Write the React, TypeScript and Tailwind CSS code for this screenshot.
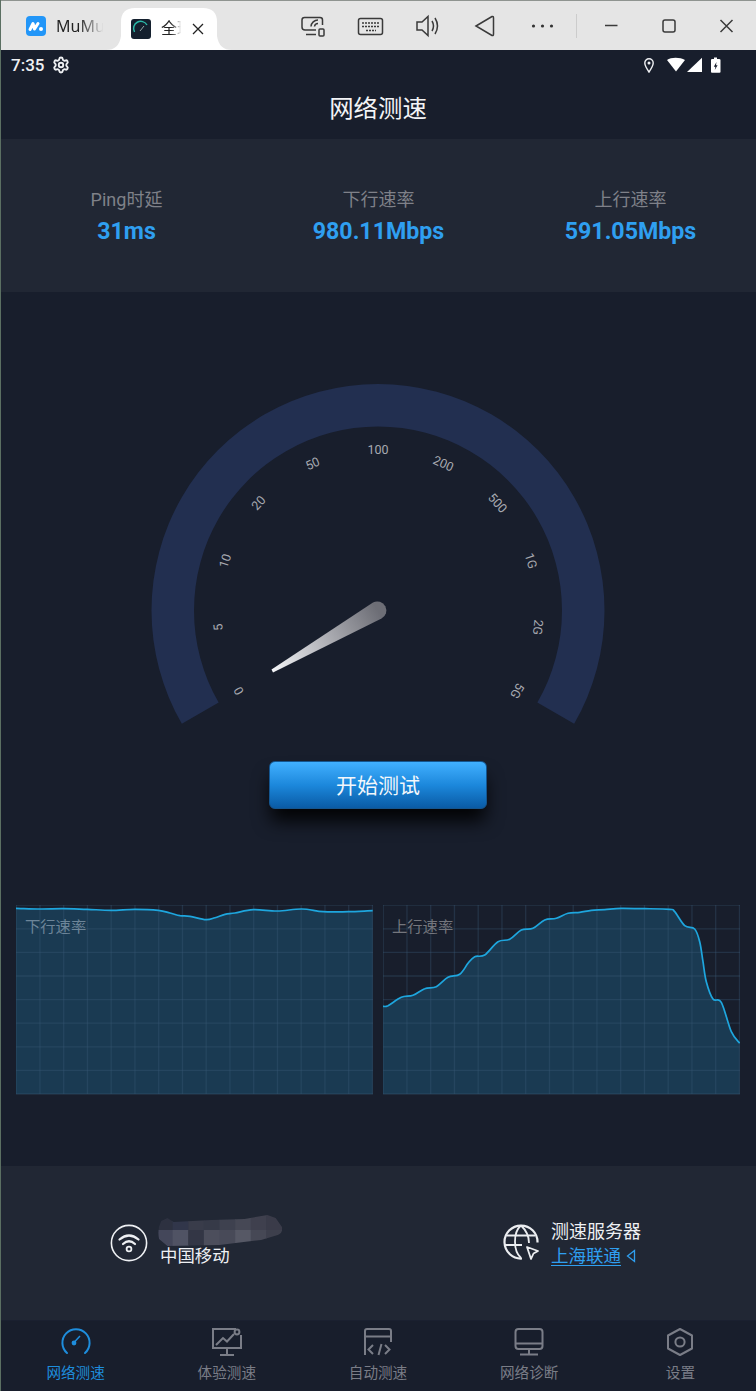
import React from "react";
import { Settings } from "lucide-react";

type P = [number, number];

function smooth(pts: P[]) {
  let d = `M${pts[0][0]} ${pts[0][1]}`;
  for (let i = 0; i < pts.length - 1; i++) {
    const a = pts[Math.max(0, i - 1)];
    const b = pts[i];
    const c = pts[i + 1];
    const e = pts[Math.min(pts.length - 1, i + 2)];
    const t = 0.17;
    d += ` C${(b[0] + (c[0] - a[0]) * t).toFixed(1)} ${(b[1] + (c[1] - a[1]) * t).toFixed(1)} ${(c[0] - (e[0] - b[0]) * t).toFixed(1)} ${(c[1] - (e[1] - b[1]) * t).toFixed(1)} ${c[0].toFixed(1)} ${c[1].toFixed(1)}`;
  }
  return d;
}

const down: P[] = ([
  [48, 40], [120, 42], [190, 41], [262, 43], [333, 46], [405, 43], [475, 46], [510, 54], [540, 62], [570, 64], [618, 74], [645, 68], [675, 58], [705, 54], [760, 44], [832, 48], [905, 42], [970, 50], [1045, 50], [1118, 47],
] as P[]).map(([x, y]) => [x / 3 - 16, y / 3 - 10] as P);

const up: P[] = ([
  [15, 334], [30, 332], [70, 307], [105, 301], [140, 281], [175, 275], [210, 247], [245, 238], [270, 205], [290, 185], [320, 180], [360, 140], [395, 133], [430, 105], [465, 100], [500, 75], [535, 70], [570, 55], [605, 52], [640, 46], [680, 44], [730, 40], [800, 41], [875, 43], [890, 50], [920, 92], [950, 102], [965, 140], [975, 200], [985, 260], [1005, 312], [1030, 322], [1060, 410], [1085, 445],
] as P[]).map(([x, y]) => [x / 3 - 5, y / 3 - 10] as P);

function Chart({ pts, label, labelClass }: { pts: P[]; label: string; labelClass: string }) {
  const line = smooth(pts);
  const last = pts[pts.length - 1];
  const cols = Array.from({ length: 16 }, (_, i) => i * 23.75 + 0.2);
  const rows = Array.from({ length: 9 }, (_, i) => i * 23.6 + 0.2);
  return (
    <div className="relative h-[190px] w-[357px]">
      <svg width="357" height="190" viewBox="0 0 357 190" className="block">
        <path d={`${line} L${last[0]} 189 L${pts[0][0]} 189 Z`} fill="#1a3a52" />
        {cols.map((x) => (
          <line key={x} x1={x} x2={x} y1="0" y2="189" stroke="#3a5b78" strokeOpacity="0.34" strokeWidth="1.3" />
        ))}
        {rows.map((y) => (
          <line key={y} x1="0" x2="357" y1={y} y2={y} stroke="#3a5b78" strokeOpacity="0.34" strokeWidth="1.3" />
        ))}
        <path d={line} fill="none" stroke="#1ea6de" strokeWidth="1.7" />
      </svg>
      <span className={`absolute left-[9px] top-[11px] text-[15.3px] leading-[22px] ${labelClass}`}>{label}</span>
    </div>
  );
}

const ticks = ["0", "5", "10", "20", "50", "100", "200", "500", "1G", "2G", "5G"];

function Gauge() {
  const cx = 240;
  const cy = 240.5;
  const rad = (a: number) => ((a - 90) * Math.PI) / 180;
  const pt = (r: number, a: number) => [cx + r * Math.cos(rad(a)), cy + r * Math.sin(rad(a))];
  const [ox0, oy0] = pt(226.5, -120);
  const [ox1, oy1] = pt(226.5, 120);
  const [ix0, iy0] = pt(184, -120);
  const [ix1, iy1] = pt(184, 120);
  return (
    <svg width="480" height="370" viewBox="0 0 480 370" className="block">
      <defs>
        <linearGradient id="needle" gradientUnits="userSpaceOnUse" x1="134" y1="301" x2="240" y2="241">
          <stop offset="0" stopColor="#f4f5f8" />
          <stop offset="1" stopColor="#6d6e76" />
        </linearGradient>
      </defs>
      <path
        d={`M${ox0} ${oy0} A226.5 226.5 0 1 1 ${ox1} ${oy1} L${ix1} ${iy1} A184 184 0 1 0 ${ix0} ${iy0} Z`}
        fill="#222f50"
      />
      {ticks.map((t, i) => {
        const a = -120 + i * 24;
        const [x, y] = pt(161, a);
        return (
          <text
            key={t}
            x={x}
            y={y}
            textAnchor="middle"
            dominantBaseline="central"
            fontSize="12.5"
            fill="#a7a9b0"
            transform={`rotate(${a} ${x} ${y})`}
          >
            {t}
          </text>
        );
      })}
      <path d="M133.5 299.5 L235 232.5 A9 9 0 1 1 243.5 248.5 L135 302.5 Z" fill="url(#needle)" />
    </svg>
  );
}

function WindowBar() {
  return (
    <div className="relative flex h-[50px] items-center border-t border-[#8f9490] bg-[#e5e5e5]">
      <div className="ml-[26px] flex items-center gap-[10px]">
        <svg width="20" height="20" viewBox="0 0 20 20">
          <rect width="20" height="20" rx="4" fill="#2296f8" />
          <path d="M4 13.5 L7 7.5 L8.5 13 L12 7.5" fill="none" stroke="#fff" strokeWidth="3" strokeLinecap="round" strokeLinejoin="round" />
          <circle cx="15" cy="13" r="2" fill="#fff" />
        </svg>
        <span className="w-[50px] whitespace-nowrap bg-gradient-to-r from-[#222] from-45% to-[#e5e5e5] to-95% bg-clip-text text-[16px] text-transparent [font-family:'Noto_Sans',sans-serif]">
          MuMu
        </span>
      </div>
      <svg className="absolute bottom-0 left-[106px]" width="126" height="42" viewBox="0 0 126 42">
        <path d="M0 42 Q13 42 15 28 V14 Q15 0 29 0 H97 Q111 0 111 14 V28 Q113 42 126 42 Z" fill="#fff" />
      </svg>
      <div className="absolute bottom-0 left-[131px] flex h-[42px] items-center">
        <svg width="20" height="20" viewBox="0 0 20 20">
          <rect width="20" height="20" rx="3" fill="#14202e" />
          <path d="M3.5 13 A7 7 0 0 1 16 6" fill="none" stroke="#2bb8a8" strokeWidth="1.5" />
          <path d="M9 12 L13 7" stroke="#9aa" strokeWidth="1" />
        </svg>
        <span className="ml-[10px] w-[24px] overflow-hidden whitespace-nowrap bg-gradient-to-r from-[#222] from-40% to-white to-85% bg-clip-text text-[16px] text-transparent">
          全球网络
        </span>
        <svg className="ml-[7px]" width="12" height="12" viewBox="0 0 12 12">
          <path d="M1 1 L11 11 M11 1 L1 11" stroke="#222" strokeWidth="1.3" />
        </svg>
      </div>
      <svg className="absolute left-[296px] top-0" width="460" height="49" viewBox="296 0 460 49" fill="none" stroke="#3a3a3a" strokeWidth="1.5">
        <path d="M316 29 H305 Q302 29 302 26 V19 Q302 16.5 304.5 16.5 H320 Q322.5 16.5 322.5 19 V24" />
        <path d="M306 33.5 H316" />
        <path d="M311 25.5 A7 7 0 0 1 318 19 M314.5 25.5 A3.5 3.5 0 0 1 318 22.5" />
        <rect x="319" y="28" width="5" height="7" rx="1" />
        <rect x="358.5" y="17.5" width="24" height="16" rx="2" />
        <path d="M362 22 H379 M362 25.5 H379 M366 29.5 H376" strokeDasharray="2 1" />
        <path d="M417 21 H422 L428 15.5 V34.5 L422 29 H417 Z" />
        <path d="M432 20 Q435 25 432 30 M435 17 Q440 25 435 33" />
        <path d="M476 25 L492 15.5 Q493.5 15 493.5 17 V33 Q493.5 35 492 34.5 Z" />
        <circle cx="533.5" cy="25" r="1.6" fill="#333" stroke="none" />
        <circle cx="542.5" cy="25" r="1.6" fill="#333" stroke="none" />
        <circle cx="551.5" cy="25" r="1.6" fill="#333" stroke="none" />
        <path d="M576.5 13 V37" stroke="#ccc" strokeWidth="1" />
        <path d="M605 24.5 H617.5" />
        <rect x="663" y="19" width="12" height="12" rx="2" />
        <path d="M720.5 19 L732.5 31 M732.5 19 L720.5 31" />
      </svg>
    </div>
  );
}

function StatusBar() {
  return (
    <div className="flex h-[30px] items-center justify-between pl-[11px] pr-[34px] text-[#eef0f3]">
      <div className="flex items-center gap-[8px]">
        <span className="text-[17px] font-medium leading-none">7:35</span>
        <Settings size={18} strokeWidth={2.5} color="#eef0f3" />
      </div>
      <svg width="78" height="16" viewBox="0 0 78 16">
        <path d="M5 15 C2 10.5 .8 8.5 .8 6 A4.2 4.2 0 0 1 9.2 6 C9.2 8.5 8 10.5 5 15 Z" fill="none" stroke="#eef0f3" strokeWidth="1.4" />
        <circle cx="5" cy="6" r="1.5" fill="#eef0f3" />
        <path d="M23 3 C27 0 36 0 41 3 L32 14.5 Z" fill="#fff" />
        <path d="M58 0.8 V15 H43 Z" fill="#fff" />
        <path d="M68 2 H70 V0.5 H73 V2 H75 Q76.5 2 76.5 3 V15 Q76.5 15.8 75.5 15.8 H68 Q67 15.8 67 15 V3 Q67 2 68 2 Z" fill="#fff" />
        <path d="M72.5 5 L69.8 9.7 H71.4 L70.8 13 L73.6 8.3 H72 Z" fill="#181e2c" />
      </svg>
    </div>
  );
}

function Stat({ label, value }: { label: string; value: string }) {
  return (
    <div className="flex flex-col items-center gap-[3px] pl-[1px]">
      <span className="text-[18px] leading-[26px] text-[#7f8189]">{label}</span>
      <span className="text-[23.2px] font-bold leading-[30px] text-[#2f9ff0]">{value}</span>
    </div>
  );
}

function Blur() {
  const cells: [number, number, string][] = [
    [0, 0, "#2d3140"], [15, 0, "#31364a"], [30, 0, "#393c4a"], [45, 0, "#363a48"], [60, 0, "#3e414f"], [75, 0, "#464855"], [90, 0, "#3f404e"], [105, 0, "#3a3b49"],
    [0, 15, "#44475a"], [15, 15, "#505364"], [30, 15, "#333645"], [45, 15, "#4c4e5c"], [60, 15, "#484a58"], [75, 15, "#565865"], [90, 15, "#464855"], [105, 15, "#3d3f4c"],
  ];
  return (
    <svg width="126" height="32" viewBox="0 0 121 32" preserveAspectRatio="none" className="block -ml-[3px]">
      <defs>
        <clipPath id="smear">
          <path d="M4 6 L10 3 L16 7 L52 5 L84 4 L106 0 L114 3 L120 12 Q121 18 116 20 L100 25 L60 30 L10 31 L2 24 Q0 14 4 6 Z" />
        </clipPath>
      </defs>
      <g clipPath="url(#smear)">
        {cells.map(([x, y, c]) => (
          <rect key={`${x}-${y}`} x={x} y={y} width="15.5" height="16" fill={c} />
        ))}
      </g>
    </svg>
  );
}

function Footer() {
  return (
    <div className="mt-[71px] flex h-[154px] bg-[#212734]">
      <div className="ml-[110px] mt-[49px] flex w-[172px] items-start gap-[12px]">
        <svg className="mt-[9px] shrink-0" width="38" height="38" viewBox="0 0 38 38" fill="none" stroke="#eef0f3" strokeWidth="1.6">
          <circle cx="19" cy="19" r="17.6" />
          <path d="M9.5 15.5 Q19 7.5 28.5 15.5 M13 20 Q19 14.5 25 20" strokeWidth="2.2" strokeLinecap="round" />
          <circle cx="19" cy="25" r="2.4" strokeWidth="1.8" />
        </svg>
        <div className="flex flex-col">
          <Blur />
          <span className="-mt-[4px] whitespace-nowrap text-[17.4px] leading-[26px] text-[#eef0f3]">中国移动</span>
        </div>
      </div>
      <div className="ml-[221px] mt-[52px] flex items-center gap-[12px] self-start">
        <svg className="-mt-[2px]" width="36" height="36" viewBox="0 0 36 36" fill="none" stroke="#eceef1" strokeWidth="1.8">
          <path d="M19 34.5 A16.5 16.5 0 1 1 34.5 18.5" strokeWidth="2.2" />
          <path d="M18 1.5 C10 8 10 27 18 34 M18 1.5 C25 8 26 14 26 19" />
          <path d="M3.5 11.5 H32 M2 21 H19" />
          <path d="M24 23 L35 27 L30.5 29.5 L28 35 Z" strokeWidth="1.8" strokeLinejoin="round" />
        </svg>
        <div className="flex flex-col pt-[1px]">
          <span className="text-[18px] leading-[25px] text-[#eef0f3]">测速服务器</span>
          <div className="flex items-center gap-[5px]">
            <span className="text-[17.5px] leading-[24px] text-[#2f9ff0] underline underline-offset-[3px]">上海联通</span>
            <svg width="10" height="14" viewBox="0 0 10 14">
              <path d="M8.5 1.5 L1.5 7 L8.5 12.5 Z" fill="none" stroke="#2f9ff0" strokeWidth="1.3" />
            </svg>
          </div>
        </div>
      </div>
    </div>
  );
}

function TabIcon({ i }: { i: number }) {
  const stroke = i === 0 ? "#1e8ddc" : "#7a7d87";
  return (
    <svg width="32" height="28" viewBox="0 0 32 28" fill="none" stroke={stroke} strokeWidth="2">
      {i === 0 && (
        <>
          <path d="M7 25 A13.6 13.6 0 1 1 25 25" strokeLinecap="round" />
          <path d="M14 14.5 L20 8" strokeWidth="1.5" />
          <circle cx="14" cy="15" r="2.4" fill={stroke} stroke="none" />
        </>
      )}
      {i === 1 && (
        <>
          <path d="M25 1 H2 V20 H30 V7" />
          <path d="M9 27 H23 M16 20 V27" />
          <path d="M5 17 L12 10 L16 13.5 L23 6" />
          <circle cx="26" cy="4" r="2.4" />
        </>
      )}
      {i === 2 && (
        <>
          <path d="M3 27 V3 Q3 1 5 1 H27 Q29 1 29 3 V14" />
          <path d="M3 8.5 H29" />
          <path d="M11 17 L6.5 21.5 L11 26 M16.5 27 L19.5 16 M23 17 L27.5 21.5 L23 26" strokeWidth="2" />
        </>
      )}
      {i === 3 && (
        <>
          <rect x="2.5" y="1" width="27" height="20" rx="3" />
          <path d="M2.5 15.5 H29.5 M16 21 V26.5 M7 26.5 H25" />
        </>
      )}
      {i === 4 && (
        <>
          <path d="M16 1 L28 7.5 V20.5 L16 27 L4 20.5 V7.5 Z" strokeLinejoin="round" />
          <circle cx="16" cy="14" r="4.6" />
        </>
      )}
    </svg>
  );
}

const tabs = ["网络测速", "体验测速", "自动测速", "网络诊断", "设置"];

export default function App() {
  return (
    <div className="relative h-[1391px] w-[756px] overflow-hidden bg-[#181e2c] [font-family:Roboto,'Noto_Sans_CJK_SC',sans-serif]">
      <div className="absolute bottom-0 left-0 top-0 z-10 w-px bg-[#5b6f62]" />
      <WindowBar />
      <StatusBar />
      <h1 className="flex h-[59px] items-center justify-center pb-[1px] text-[24.4px] font-normal text-[#f3f4f6]">网络测速</h1>
      <div className="grid h-[153px] grid-cols-3 items-center bg-[#212734] pt-[2px]">
        <Stat label="Ping时延" value="31ms" />
        <Stat label="下行速率" value="980.11Mbps" />
        <Stat label="上行速率" value="591.05Mbps" />
      </div>
      <div className="flex flex-col items-center pt-[78px]">
        <Gauge />
        <button className="mt-[21px] flex h-[48px] w-[218px] items-center justify-center rounded-[6px] border border-[#14558f] bg-gradient-to-b from-[#40b0ff] via-[#1c88dc] to-[#0a5ba5] pt-[3px] text-[21px] text-[#f3f7fb] shadow-[0_14px_18px_-2px_rgba(0,0,0,0.9)]">
          开始测试
        </button>
      </div>
      <div className="mt-[96px] flex gap-[10px] pl-[16px]">
        <Chart pts={down} label="下行速率" labelClass="text-[#6d8599]" />
        <Chart pts={up} label="上行速率" labelClass="text-[#74767d]" />
      </div>
      <Footer />
      <nav className="grid h-[71px] grid-cols-5 border-t border-[#1a2030]">
        {tabs.map((t, i) => (
          <div key={t} className="flex flex-col items-center pt-[7px]">
            <TabIcon i={i} />
            <span className={`mt-[5px] text-[14.6px] leading-[24px] ${i === 0 ? "text-[#1e8ddc]" : "text-[#7a7d87]"}`}>{t}</span>
          </div>
        ))}
      </nav>
    </div>
  );
}
